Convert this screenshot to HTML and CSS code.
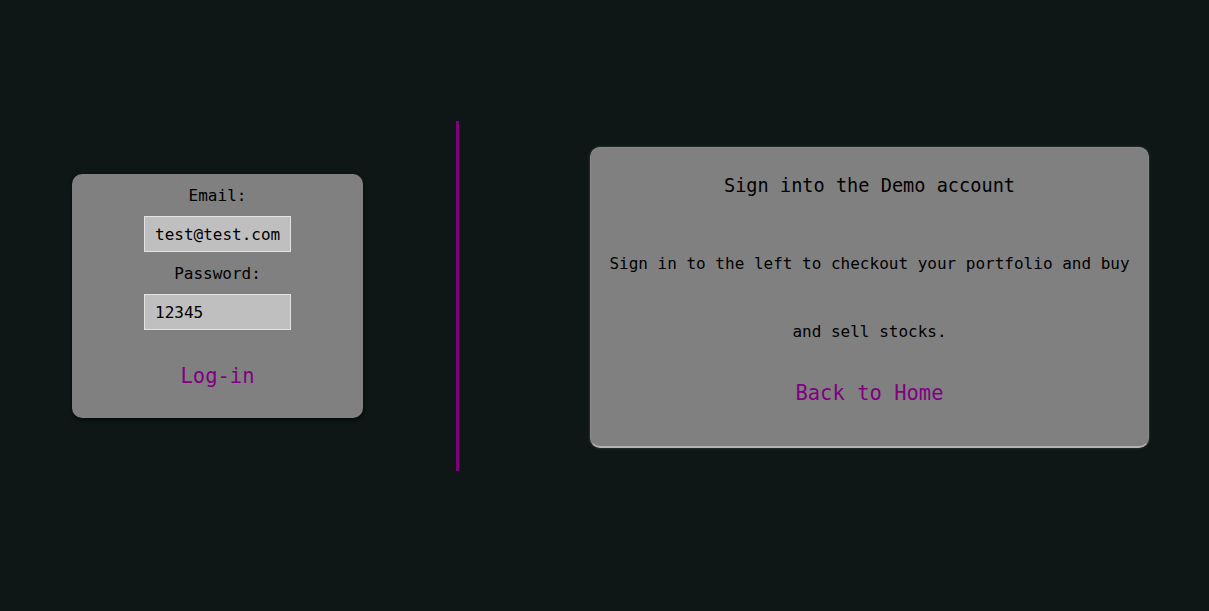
FILE: index.html
```html
<!DOCTYPE html>
<html>
<head>
<meta charset="utf-8">
<link rel="stylesheet" href="styles.css">
</head>
<body>
<main class="page">
  <form class="login-card">
    <label class="field-label" for="email">Email:</label>
    <input class="field-input" id="email" type="text" value="test@test.com">
    <label class="field-label" for="password">Password:</label>
    <input class="field-input" id="password" type="text" value="12345">
    <a class="purple-link login-link" href="#">Log-in</a>
  </form>
  <div class="divider"></div>
  <section class="info-card">
    <h3 class="info-title">Sign into the Demo account</h3>
    <p class="info-text">Sign in to the left to checkout your portfolio and buy and sell stocks.</p>
    <a class="purple-link home-link" href="#">Back to Home</a>
  </section>
</main>
</body>
</html>
```

FILE: styles.css
```css
html, body {
  margin: 0;
  padding: 0;
  background: #0e1616;
  height: 100%;
}
body {
  font-family: "DejaVu Sans Mono", monospace;
  color: #000;
}
.page {
  display: flex;
  align-items: center;
  height: 592px;
  padding-left: 72px;
  box-sizing: border-box;
}
.login-card {
  width: 291px;
  height: 244px;
  box-sizing: border-box;
  background: #808080;
  border-radius: 10px;
  box-shadow: 0 2px 4px rgba(0, 0, 0, 0.6);
  display: flex;
  flex-direction: column;
  align-items: center;
  padding-top: 10px;
}
.field-label {
  font-size: 16px;
  line-height: 22px;
  padding-top: 1px;
  margin-bottom: 9px;
}
.field-input {
  width: 147px;
  height: 36px;
  box-sizing: border-box;
  background: #bfbfbf;
  border: 1px solid #e2e2e2;
  font-family: "DejaVu Sans Mono", monospace;
  font-size: 16px;
  color: #000;
  padding: 0 0 0 10px;
  margin: 0 0 10px 0;
  outline: none;
}
.purple-link {
  color: #800080;
  text-decoration: none;
  font-size: 20.5px;
}
.login-link {
  margin-top: 23px;
  line-height: 26px;
}
.divider {
  width: 3px;
  height: 350px;
  background: #800080;
  margin-left: 93px;
}
.info-card {
  width: 559px;
  height: 301px;
  box-sizing: border-box;
  margin-left: 131px;
  margin-top: 2px;
  background: #808080;
  border-radius: 10px;
  border: 1px solid #8a8a8a;
  border-bottom: 2px solid #b4b4b4;
  box-shadow: 0 0 3px rgba(160, 160, 160, 0.35);
  display: flex;
  flex-direction: column;
  align-items: center;
  text-align: center;
  padding: 25px 18px 0;
}
.info-title {
  font-size: 18.6px;
  font-weight: normal;
  line-height: 26px;
  margin: 0;
}
.info-text {
  font-size: 16px;
  line-height: 68px;
  margin: 31px 0 0 0;
}
.home-link {
  margin-top: 14px;
  line-height: 26px;
}
```
